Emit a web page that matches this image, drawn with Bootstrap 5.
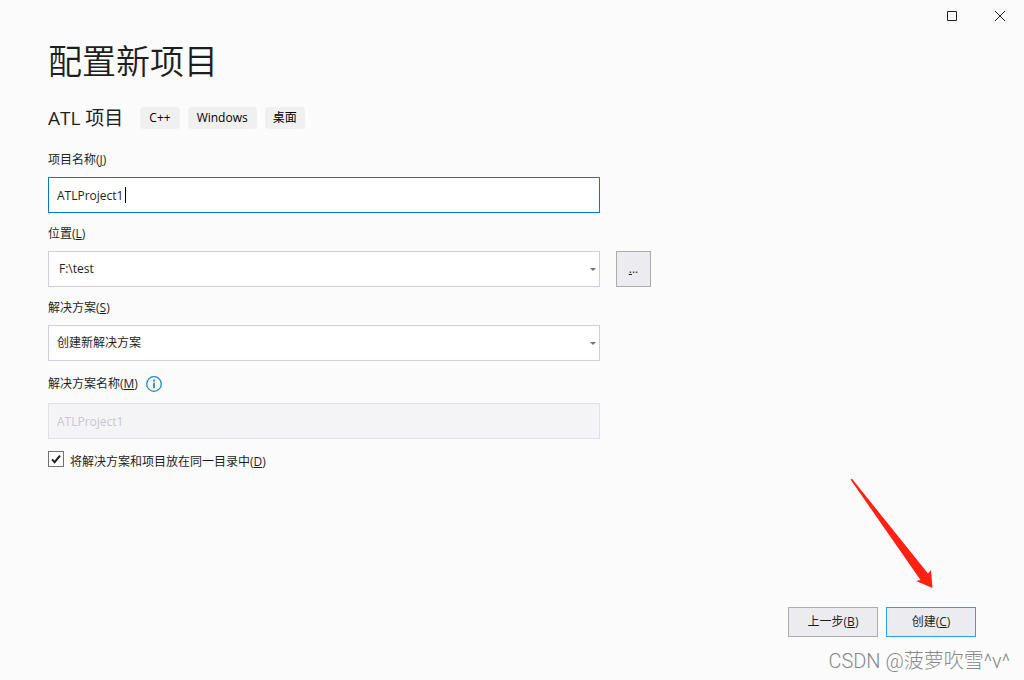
<!DOCTYPE html>
<html lang="zh-CN">
<head>
<meta charset="utf-8">
<meta name="viewport" content="width=device-width, initial-scale=1">
<title>配置新项目</title>
<link href="https://cdn.jsdelivr.net/npm/bootstrap@5.3.0/dist/css/bootstrap.min.css" rel="stylesheet">
<style>
  body { background: #fbfbfb; color: #1e1e1e; font: 12px/18px "Open Sans", "Noto Sans CJK SC", sans-serif; }
  .page-pad { padding-left: 48px; padding-right: 48px; }
  .window-bar { height: 32px; }
  .window-btn { width: 48px; height: 32px; border: 0; background: none; color: #1e1e1e; }
  .window-btn svg { display: block; margin: auto; }
  .page-title { font-size: 34px; line-height: 40px; font-weight: 350; margin: 9px 0 23px; }
  .template-name { font-size: 19px; line-height: 28px; font-weight: 400; margin-right: 9px; }
  .tag { background: #f0f0f0; color: #000; border-radius: 4px; padding: 2px 8px; }
  .tag-latin { padding-left: 9px; padding-right: 9px; }
  .form-area { max-width: 552px; gap: 12px; margin-top: 19px; }
  .field-label { margin-bottom: 8px; }
  .field-box { height: 36px; border-radius: 0; border: 1px solid #cccedb; padding: 0 8px; font-size: 12px; line-height: 18px; color: #1e1e1e; background-color: #fff; }
  .field-box:focus { box-shadow: none; border-color: #007acc; }
  .field-active { border-color: #007acc; caret-color: transparent; }
  .field-box:disabled { background-color: #f4f4f6; color: #c6c8d2; border-color: #e0e1e8; opacity: 1; }
  select.field-box { background-image: url("data:image/svg+xml,%3Csvg xmlns='http://www.w3.org/2000/svg' viewBox='0 0 6 3'%3E%3Cpath d='M0 0h6L3 3z' fill='%23717171'/%3E%3C/svg%3E"); background-size: 6px 3px; background-position: right 3px center; }
  .location-box { padding-left: 10px; }
  .caret { left: 77px; top: 10px; width: 1px; height: 16px; background: #000; }
  .browse { left: 100%; top: 0; margin-left: 16px; width: 35px; height: 36px; }
  .vs-btn { background: #ececf0; border: 1px solid #acacac; border-radius: 0; color: #1e1e1e; font-size: 12px; line-height: 18px; padding: 0; }
  .wizard-btn { width: 90px; height: 30px; }
  .vs-primary { border-color: #3399ff; }
  .info-row { height: 22px; gap: 8px; }
  .info-btn { border: 0; padding: 0; background: none; }
  .info-btn svg { display: block; }
  .check-row { gap: 6px; }
  .check-row label { padding-top: 2px; }
  .check-row .check-box { width: 16px; height: 16px; margin: 0; border: 1px solid #717171; border-radius: 0; }
  .check-box:checked { background-color: #fff; background-size: 14px 14px; background-image: url("data:image/svg+xml,%3Csvg xmlns='http://www.w3.org/2000/svg' viewBox='0 0 14 14'%3E%3Cpath d='M3 7.4l2.6 2.8L11 3.6' fill='none' stroke='%231e1e1e' stroke-width='2'/%3E%3C/svg%3E"); }
  .arrow { right: 90px; bottom: 91px; pointer-events: none; }
  .watermark { font: 20px/24px Roboto, "Noto Sans CJK SC", sans-serif; font-weight: 300; color: #888; padding: 12px 14px 7px; }
</style>
</head>
<body>
<div class="d-flex flex-column min-vh-100 position-relative">
  <header class="window-bar d-flex justify-content-end">
    <button type="button" class="window-btn p-0" aria-label="最大化"><svg width="10" height="10"><path d="M.5.5h9v9h-9z" fill="none" stroke="currentColor"/></svg></button>
    <button type="button" class="window-btn p-0" aria-label="关闭"><svg width="10" height="10"><path d="M0 0l10 10M10 0L0 10" stroke="currentColor"/></svg></button>
  </header>
  <main class="page-pad">
    <h1 class="page-title">配置新项目</h1>
    <div class="d-flex align-items-center gap-2">
      <h2 class="template-name mb-0">ATL 项目</h2>
      <span class="tag tag-latin">C++</span>
      <span class="tag tag-latin">Windows</span>
      <span class="tag">桌面</span>
    </div>
    <form class="form-area d-flex flex-column">
      <div>
        <label class="field-label d-block" for="name">项目名称(<u>J</u>)</label>
        <div class="position-relative">
          <input id="name" class="form-control field-box field-active" value="ATLProject1">
          <span class="caret position-absolute"></span>
        </div>
      </div>
      <div>
        <label class="field-label d-block" for="location">位置(<u>L</u>)</label>
        <div class="position-relative">
          <select id="location" class="form-select field-box location-box"><option>F:\test</option></select>
          <button type="button" class="btn vs-btn browse position-absolute" aria-label="浏览"><u>.</u>..</button>
        </div>
      </div>
      <div>
        <label class="field-label d-block" for="solution">解决方案(<u>S</u>)</label>
        <select id="solution" class="form-select field-box"><option>创建新解决方案</option></select>
      </div>
      <div>
        <div class="field-label info-row d-flex align-items-center">
          <label for="solution-name">解决方案名称(<u>M</u>)</label>
          <button type="button" class="info-btn" aria-label="信息"><svg width="16" height="16"><circle cx="8" cy="8" r="7.3" fill="none" stroke="#1c86d8" stroke-width="1.3"/><path d="M8 3.6v2M8 6.8v5.4" stroke="#1c86d8" stroke-width="1.8"/></svg></button>
        </div>
        <input id="solution-name" class="form-control field-box" value="ATLProject1" disabled>
      </div>
      <div class="check-row d-flex align-items-start">
        <input type="checkbox" id="same-dir" class="form-check-input check-box" checked>
        <label for="same-dir">将解决方案和项目放在同一目录中(<u>D</u>)</label>
      </div>
    </form>
  </main>
  <footer class="mt-auto">
    <div class="page-pad d-flex justify-content-end gap-2">
      <button type="button" class="btn vs-btn wizard-btn">上一步(<u>B</u>)</button>
      <button type="button" class="btn vs-btn vs-primary wizard-btn">创建(<u>C</u>)</button>
    </div>
    <div class="watermark text-end">CSDN @菠萝吹雪^v^</div>
  </footer>
  <svg class="arrow position-absolute" width="84" height="111" viewBox="0 0 84 111" aria-hidden="true"><path d="M.5 1.500L2 .8 78 95.500 81 92l1.500 18L66 103l4.500-1z" fill="#ff2213"/></svg>
</div>
<script src="https://cdn.jsdelivr.net/npm/bootstrap@5.3.0/dist/js/bootstrap.bundle.min.js"></script>
</body>
</html>
